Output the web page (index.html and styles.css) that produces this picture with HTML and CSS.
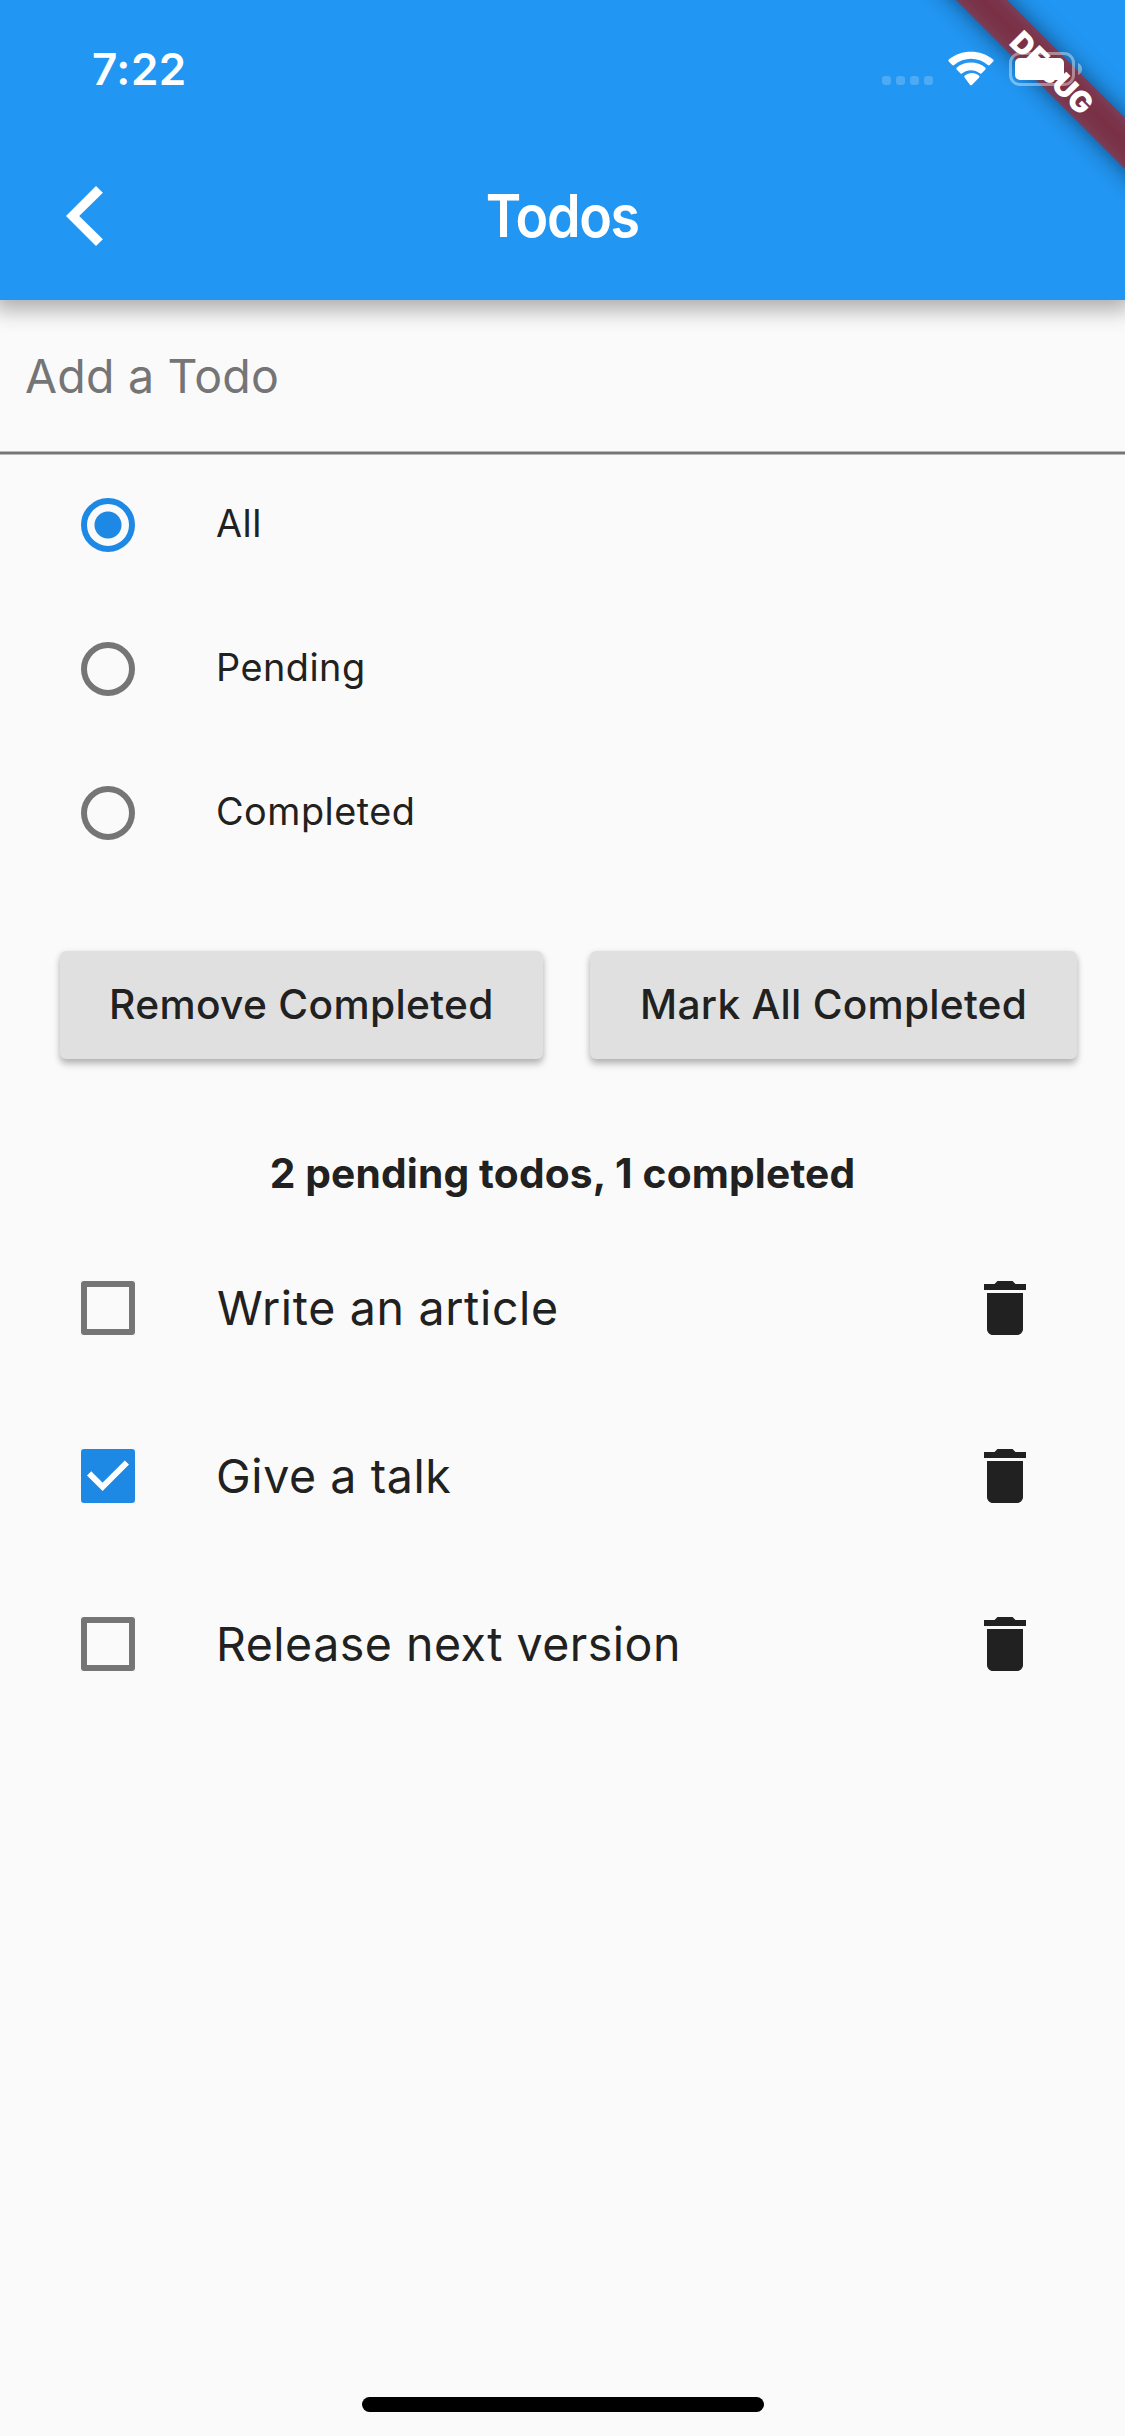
FILE: index.html
```html
<!DOCTYPE html>
<html lang="en">
<head>
  <meta charset="utf-8">
  <meta name="viewport" content="width=device-width">
  <title>Todos</title>
  <link rel="stylesheet" href="styles.css">
</head>
<body>
  <div class="screen">
    <header class="header">
      <div class="status-bar">
        <span class="clock">7:22</span>
        <svg class="status-icons" width="210" height="40" viewBox="880 49 210 40" aria-hidden="true">
          <g fill="#fff" fill-opacity=".2">
            <rect x="882" y="76" width="9" height="9" rx="3"/>
            <rect x="896" y="76" width="9" height="9" rx="3"/>
            <rect x="910" y="76" width="9" height="9" rx="3"/>
            <rect x="924" y="76" width="9" height="9" rx="3"/>
          </g>
          <g fill="#fff">
            <path d="M948.8 61.6a1.5 1.5 0 0 1 0-2.1C961 49 981 49 993.2 59.5a1.5 1.5 0 0 1 0 2.1L989.8 65a1.5 1.5 0 0 1-2 .1C978 56.7 964 56.7 954.2 65.1a1.5 1.5 0 0 1-2-.1z"/>
            <path d="M956.8 69.7a1.5 1.5 0 0 1 0-2.1C964.5 60.8 977.5 60.8 985.2 67.6a1.5 1.5 0 0 1 0 2.1L981.7 73.2a1.5 1.5 0 0 1-2 .1C974.5 69.1 967.5 69.1 962.3 73.3a1.5 1.5 0 0 1-2-.1z"/>
            <path d="M964.8 77.8a1.5 1.5 0 0 1 .1-2.2c4-3.4 10-3.4 14 0a1.5 1.5 0 0 1 .1 2.2L971.900 84.900a1.400 1.400 0 0 1-2-.1z"/>
          </g>
        </svg>
      </div>
      <div class="app-bar">
        <svg class="back" width="40" height="60" viewBox="0 0 40 60" role="img" aria-label="Back">
          <path fill="#fff" d="M0 30 30 0 36.900 6.700 13.200 30 36.900 53.300 30 60z"/>
        </svg>
        <h1 class="title">Todos</h1>
      </div>
    </header>

    <main class="content">
      <div class="field">Add a Todo</div>

      <div class="filters">
        <div class="filter"><span class="radio radio-on"></span><span class="filter-name">All</span></div>
        <div class="filter"><span class="radio"></span><span class="filter-name">Pending</span></div>
        <div class="filter"><span class="radio"></span><span class="filter-name">Completed</span></div>
      </div>

      <div class="actions">
        <button class="button button-remove">Remove Completed</button>
        <button class="button button-mark">Mark All Completed</button>
      </div>

      <p class="summary">2 pending todos, 1 completed</p>

      <div class="todos">
        <div class="todo">
          <span class="checkbox"></span>
          <span class="todo-name todo-article">Write an article</span>
          <svg class="trash" viewBox="0 0 24 24"><path d="M6 19c0 1.100.9 2 2 2h8c1.100 0 2-.9 2-2V7H6v12zM19 4h-3.500l-1-1h-5l-1 1H5v2h14V4z"/></svg>
        </div>
        <div class="todo">
          <span class="checkbox checkbox-on">
            <svg width="54" height="54" viewBox="0 0 54 54"><path d="M8.100 24.300 21.600 37.800 45.900 13.500" fill="none" stroke="#fff" stroke-width="6"/></svg>
          </span>
          <span class="todo-name todo-talk">Give a talk</span>
          <svg class="trash" viewBox="0 0 24 24"><path d="M6 19c0 1.100.9 2 2 2h8c1.100 0 2-.9 2-2V7H6v12zM19 4h-3.500l-1-1h-5l-1 1H5v2h14V4z"/></svg>
        </div>
        <div class="todo">
          <span class="checkbox"></span>
          <span class="todo-name">Release next version</span>
          <svg class="trash" viewBox="0 0 24 24"><path d="M6 19c0 1.100.9 2 2 2h8c1.100 0 2-.9 2-2V7H6v12zM19 4h-3.500l-1-1h-5l-1 1H5v2h14V4z"/></svg>
        </div>
      </div>
    </main>

    <div class="home-indicator"></div>

    <!-- Debug ribbon across the top right corner, with the battery above it -->
    <svg class="ribbon" width="280" height="260" viewBox="845 0 280 260">
      <defs>
        <filter id="soft" x="-30%" y="-100%" width="160%" height="300%"><feGaussianBlur stdDeviation="12"/></filter>
      </defs>
      <g transform="translate(1053.200 71.700) rotate(45)">
        <rect x="-180" y="-18" width="360" height="36" fill="#000" fill-opacity=".5" filter="url(#soft)"/>
        <rect x="-180" y="-18" width="360" height="36" fill="#b71c1c" fill-opacity=".627"/>
        <text class="ribbon-text" x="0" y="12.400" text-anchor="middle">DEBUG</text>
      </g>
      <rect x="1010.500" y="53.500" width="63" height="31" rx="9.500" fill="none" stroke="#fff" stroke-opacity=".4" stroke-width="3"/>
      <rect x="1015" y="58" width="49" height="22" rx="5" fill="#fff"/>
      <path d="M1078 63c5.400 2 5.400 10 0 12z" fill="#fff" fill-opacity=".4"/>
    </svg>
  </div>
</body>
</html>
```
FILE: styles.css
```css
* {
  box-sizing: border-box;
}

body {
  margin: 0;
}

.screen {
  position: relative;
  display: flex;
  flex-direction: column;
  width: 1125px;
  height: 2436px;
  overflow: hidden;
  background: #fafafa;
  color: #212121;
  font-family: Inter, "Liberation Sans", sans-serif;
  font-size: 46.5px;
  line-height: 60px;
}

.header {
  position: relative;
  height: 300px;
  background: #2196f3;
  box-shadow: 0 4px 20px 6px rgba(0, 0, 0, 0.31);
  color: #fff;
}

.status-bar {
  display: flex;
  justify-content: space-between;
  height: 132px;
  padding: 39px 35px 0 92px;
}

.clock {
  font-size: 44px;
  font-weight: 600;
  letter-spacing: 0.5px;
}

.status-icons {
  margin-top: 10px;
}

.app-bar {
  display: grid;
  grid-template-columns: 1fr auto 1fr;
  align-items: center;
  height: 168px;
  padding: 0 66px;
}

.title {
  margin: 0;
  font-size: 58.5px;
  font-weight: 600;
  letter-spacing: -1.5px;
  transform: scaleX(0.92);
}

.field {
  height: 155px;
  margin-bottom: -2px;
  padding: 46px 25px 0;
  background: linear-gradient(#b8b8b8 1px, #757575 1px 3px, #b8b8b8 3px) bottom / 100% 4px no-repeat;
  color: #757575;
  letter-spacing: 0.22px;
}

.filter {
  display: flex;
  align-items: center;
  gap: 81px;
  height: 144px;
  padding: 0 81px;
  font-size: 37.8px;
  line-height: 56px;
  letter-spacing: 0.5px;
}

.filter-name {
  padding-bottom: 4px;
}

.radio {
  width: 54px;
  height: 54px;
  border: 6px solid #757575;
  border-radius: 50%;
}

.radio-on {
  border-color: #1e88e5;
  background: radial-gradient(circle, #1e88e5 13px, transparent 14px);
}

.actions {
  display: flex;
  gap: 47px;
  padding: 66px 48px 84px 59.5px;
}

.button {
  height: 108px;
  padding: 0 0 2px;
  border: 0;
  border-radius: 6px;
  background: #e0e0e0;
  box-shadow: 0 5px 7px rgba(0, 0, 0, 0.25), 0 1px 6px rgba(0, 0, 0, 0.08);
  color: #212121;
  font: 500 40.7px Inter, "Liberation Sans", sans-serif;
}

.button-remove {
  width: 484px;
  letter-spacing: 0.33px;
}

.button-mark {
  width: 487px;
  letter-spacing: 0.24px;
}

.summary {
  margin: 0;
  padding: 1px 0 20px;
  font-size: 40.7px;
  font-weight: 700;
  letter-spacing: 0.16px;
  text-align: center;
}

.todo {
  display: flex;
  align-items: center;
  height: 168px;
  padding: 0 84px 0 81px;
}

.checkbox {
  width: 54px;
  height: 54px;
  border: 6px solid #757575;
  border-radius: 3px;
}

.checkbox-on {
  border: 0;
  background: #1e88e5;
}

.checkbox-on svg {
  display: block;
}

.todo-name {
  flex: 1;
  margin-left: 81px;
  letter-spacing: 0.49px;
}

.todo-article {
  padding-left: 1px;
  letter-spacing: 0.67px;
}

.todo-talk {
  letter-spacing: 0.6px;
}

.trash {
  width: 72px;
  height: 72px;
  fill: #212121;
}

.home-indicator {
  width: 402px;
  height: 15px;
  margin: auto auto 24px;
  border-radius: 8px;
  background: #000;
}

.ribbon {
  position: absolute;
  top: 0;
  right: 0;
}

.ribbon-text {
  fill: #fff;
  font-size: 29.6px;
  font-weight: 900;
}
```
